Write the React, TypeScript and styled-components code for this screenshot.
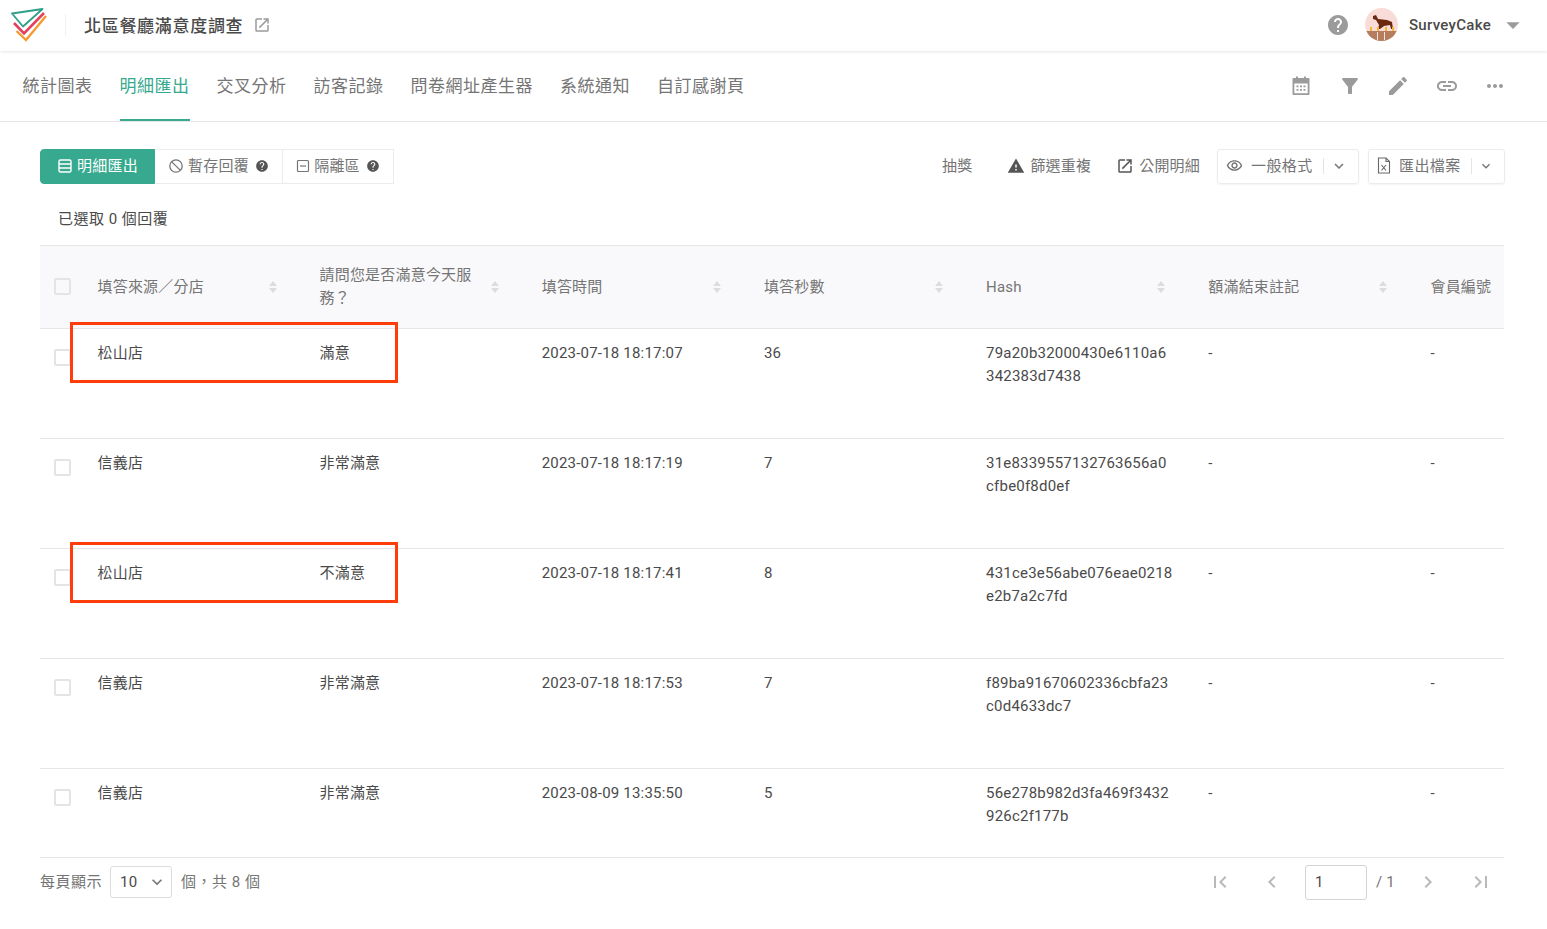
import styled, { createGlobalStyle } from "styled-components";
import {
  MdHelp,
  MdFilterAlt,
  MdEdit,
  MdLink,
  MdMoreHoriz,
  MdOutlineRemoveRedEye,
  MdWarning,
  MdOpenInNew,
  MdExpandMore,
  MdArrowDropDown,
  MdChevronLeft,
  MdChevronRight,
  MdFirstPage,
  MdLastPage,
} from "react-icons/md";

const colors = {
  green: "#36a98f",
  text: "#4a4a4a",
  gray: "#757575",
  icon: "#9b9b9b",
  line: "#e6e6e8",
  red: "#ff3d0a",
};

const GlobalStyle = createGlobalStyle`
  html, body {
    margin: 0;
    padding: 0;
    background: #fff;
    font-family: Roboto, "Noto Sans CJK TC", sans-serif;
    letter-spacing: 0.2px;
    color: ${colors.text};
  }
  * { box-sizing: border-box; }
`;

const Page = styled.div`
  width: 1547px;
  height: 929px;
  overflow: hidden;
`;

const Header = styled.header`
  display: flex;
  align-items: center;
  height: 51px;
  padding: 0 18px 2px 11px;
  box-shadow: 0 1px 3px rgba(0, 0, 0, 0.1);
`;

const Logo = styled.svg`
  width: 36px;
  height: 34px;
  margin-top: 1px;
`;

const HeaderDivider = styled.div`
  width: 1px;
  height: 22px;
  margin: 0 18px 0 18px;
  background: #f0f0f0;
`;

const Title = styled.div`
  font-size: 17px;
  font-weight: 500;
  letter-spacing: 0.7px;
  color: ${colors.text};
`;

const TitleLink = styled.span`
  display: flex;
  margin: 1px 0 0 10px;
  font-size: 18px;
  color: ${colors.icon};
`;

const Spacer = styled.div`
  flex: 1;
`;

const HelpIcon = styled.span`
  display: flex;
  font-size: 24px;
  color: ${colors.icon};
  margin-right: 15px;
`;

const Avatar = styled.svg`
  width: 33px;
  height: 33px;
  border-radius: 50%;
`;

const UserName = styled.div`
  margin-left: 11px;
  font-size: 15px;
  font-weight: 500;
  letter-spacing: 0.3px;
  color: ${colors.text};
`;

const UserCaret = styled.span`
  display: flex;
  margin-left: 6px;
  font-size: 32px;
  color: ${colors.icon};
`;

const TabBar = styled.nav`
  display: flex;
  align-items: stretch;
  height: 71px;
  padding: 0 40px 0 22.5px;
  border-bottom: 1px solid ${colors.line};
`;

const Tab = styled.div<{ $active?: boolean }>`
  display: flex;
  align-items: center;
  margin-right: 27px;
  padding-bottom: 1px;
  font-size: 17px;
  letter-spacing: 0.5px;
  color: ${(p) => (p.$active ? colors.green : colors.gray)};
  border-bottom: 2px solid ${(p) => (p.$active ? colors.green : "transparent")};
`;

const TabIcons = styled.div`
  display: flex;
  align-items: center;
  gap: 24.5px;
  margin-left: auto;
  color: ${colors.icon};
  font-size: 24px;
  svg {
    display: block;
  }
`;

const Main = styled.main`
  padding: 27px 43px 0 40px;
`;

const Toolbar = styled.div`
  display: flex;
  align-items: center;
  height: 35px;
  margin-right: -1px;
`;

const Segment = styled.div<{ $active?: boolean; $w: number }>`
  display: flex;
  align-items: center;
  justify-content: center;
  gap: 4px;
  width: ${(p) => p.$w}px;
  height: 35px;
  padding-bottom: 5px;
  font-size: 15px;
  color: ${(p) => (p.$active ? "#fff" : colors.gray)};
  background: ${(p) => (p.$active ? colors.green : "#fff")};
  border: 1px solid ${(p) => (p.$active ? colors.green : "#ececee")};
  border-left-width: ${(p) => (p.$active ? 1 : 0)}px;
  white-space: nowrap;
  &:first-child {
    border-radius: 4px 0 0 4px;
  }
  &:last-child {
    border-radius: 0 4px 4px 0;
  }
`;

const HintIcon = styled(MdHelp)`
  font-size: 14px;
  margin: 4px 0 0 2px;
  color: #555;
`;

const ToolText = styled.div<{ $mr: number }>`
  display: flex;
  align-items: center;
  gap: 5px;
  margin-right: ${(p) => p.$mr}px;
  padding-bottom: 5px;
  font-size: 15px;
  color: ${colors.gray};
  white-space: nowrap;
  svg {
    font-size: 18px;
    margin-top: 3px;
    color: #555;
  }
`;

const DropButton = styled.div<{ $w: number; $mr?: number }>`
  display: flex;
  align-items: center;
  flex: none;
  width: ${(p) => p.$w}px;
  height: 35px;
  margin-right: ${(p) => p.$mr ?? 0}px;
  padding: 0 6px 5px 8px;
  font-size: 15px;
  color: ${colors.gray};
  border: 1px solid #ececee;
  border-radius: 3px;
  box-shadow: 0 1px 2px rgba(0, 0, 0, 0.05);
  white-space: nowrap;
  svg {
    flex: none;
    margin-top: 3px;
  }
`;

const DropLabel = styled.span`
  margin-left: 8px;
  letter-spacing: 0.4px;
`;

const DropDivider = styled.span`
  width: 1px;
  height: 16px;
  margin: 4px 6px 0 10px;
  background: #e4e4e4;
`;

const SelectedNote = styled.div`
  padding: 24px 0 0 18px;
  height: 61px;
  font-size: 15px;
  line-height: 22px;
  letter-spacing: 0.5px;
  color: ${colors.text};
`;

const Table = styled.div`
  border-top: 1px solid ${colors.line};
`;

const gridColumns = `279.5px repeat(5, 222.2px) 1fr`;

const HeadRow = styled.div`
  position: relative;
  display: grid;
  grid-template-columns: ${gridColumns};
  align-items: center;
  height: 83px;
  background: #f9f9fb;
  border-bottom: 1px solid ${colors.line};
`;

const Row = styled.div<{ $h: number }>`
  position: relative;
  display: grid;
  grid-template-columns: ${gridColumns};
  align-items: start;
  height: ${(p) => p.$h}px;
  border-bottom: 1px solid ${colors.line};
`;

const HeadCell = styled.div<{ $first?: boolean }>`
  position: relative;
  display: flex;
  align-items: center;
  padding-left: ${(p) => (p.$first ? 57.5 : 0)}px;
  padding-right: 60px;
  font-size: 15px;
  line-height: 23px;
  color: ${colors.gray};
  white-space: pre-line;
`;

const LastHeadCell = styled(HeadCell)`
  padding-right: 0;
  white-space: nowrap;
`;

const SortMark = styled.svg`
  position: absolute;
  right: 42px;
  top: 50%;
  width: 10px;
  height: 14px;
  margin-top: -7px;
`;

const Cell = styled.div<{ $first?: boolean }>`
  padding: 13px 0 0 ${(p) => (p.$first ? 57.5 : 0)}px;
  font-size: 15px;
  line-height: 23px;
  color: ${colors.text};
`;

const Checkbox = styled.span`
  position: absolute;
  left: 14px;
  top: 20px;
  width: 17px;
  height: 17px;
  border: 2px solid #e4e4e6;
  border-radius: 2px;
  background: #fff;
`;

const HeadCheckbox = styled(Checkbox)`
  top: 50%;
  margin-top: -9px;
  background: #f9f9fb;
`;

const Highlight = styled.div`
  position: absolute;
  left: 30px;
  top: -7px;
  width: 328px;
  height: 61px;
  border: 3px solid ${colors.red};
`;

const Footer = styled.div`
  display: flex;
  align-items: center;
  height: 48px;
  font-size: 15px;
  color: ${colors.gray};
`;

const FooterText = styled.span`
  padding-bottom: 4px;
  letter-spacing: 0.5px;
`;

const PageSize = styled.div`
  display: flex;
  align-items: center;
  justify-content: space-between;
  width: 62px;
  height: 32px;
  margin: 0 9px 0 8px;
  padding: 0 4px 0 9px;
  border: 1px solid #dcdcdc;
  border-radius: 3px;
  color: ${colors.text};
  svg {
    font-size: 20px;
    color: ${colors.gray};
  }
`;

const Pager = styled.div`
  display: flex;
  align-items: center;
  margin-left: auto;
  margin-right: -2px;
  color: #b9b9b9;
  svg {
    display: block;
    font-size: 24px;
  }
`;

const PagerIcon = styled.span<{ $w: number }>`
  display: flex;
  justify-content: center;
  width: ${(p) => p.$w}px;
`;

const PageInput = styled.div`
  display: flex;
  align-items: center;
  width: 62px;
  height: 35px;
  padding-left: 9px;
  border: 1px solid #d4d4d4;
  border-radius: 3px;
  color: ${colors.text};
`;

const PageTotal = styled.span`
  width: 33px;
  padding-left: 9px;
  color: ${colors.gray};
  white-space: nowrap;
`;

const SurveyLogo = () => (
  <Logo viewBox="0 0 36 34" fill="none">
    <path d="M5.5 23 L15 32 L35 8" stroke="#f59a32" strokeWidth="2.4" />
    <path d="M3 15 L13 25.5 L33 5" stroke="#e2405c" strokeWidth="2.6" />
    <path d="M1 5.5 L31.5 1 L12 18.5 Z" stroke="#2f9f8a" strokeWidth="1.8" strokeLinejoin="round" />
  </Logo>
);

const HorseAvatar = () => (
  <Avatar viewBox="0 0 33 33">
    <rect width="33" height="33" fill="#f9dcd8" />
    <rect y="23" width="33" height="10" fill="#b57c5e" />
    <path d="M8 8 L11 7 L13 11 L22 12 L27 14 L28 21 L26 21 L25 17 L19 18 L15 21 L13 21 L14 17 L11 12 L8 11 Z" fill="#6b2a0e" />
    <rect x="5" y="19" width="2" height="4" fill="#f2b632" />
    <rect x="12" y="19" width="2" height="4" fill="#f2b632" />
    <rect x="20" y="19" width="2" height="4" fill="#f2b632" />
    <rect x="27" y="19" width="2" height="4" fill="#f2b632" />
    <rect x="12" y="24" width="1" height="8" fill="#efe3da" />
    <rect x="19" y="24" width="1" height="8" fill="#efe3da" />
  </Avatar>
);

const CalendarIcon = () => (
  <svg width="24" height="24" viewBox="-2 -2 24 24" fill="#9b9b9b">
    <path d="M2.5 2h2.5V0.5h2V2h6V0.5h2V2h2.5a1 1 0 0 1 1 1v15a1 1 0 0 1-1 1H2.5a1 1 0 0 1-1-1V3a1 1 0 0 1 1-1zm.8 5.5v9.7h13.4V7.500H3.300z" />
    <path d="M5.500 9.500h2v1.700h-2zM9 9.500h2v1.700H9zM12.500 9.500h2v1.700h-2zM5.500 13h2v1.700h-2zM9 13h2v1.700H9zM12.500 13h2v1.700h-2z" />
  </svg>
);

const ToolbarGlyph = styled.svg`
  flex: none;
  margin-top: 3px;
`;

const ListIcon = () => (
  <ToolbarGlyph width="16" height="16" viewBox="0 0 16 16" fill="none" stroke="currentColor" strokeWidth="1.4">
    <rect x="2" y="2" width="12" height="12" rx="1.5" />
    <path d="M2 6h12M2 10h12" />
  </ToolbarGlyph>
);

const BlockIcon = () => (
  <ToolbarGlyph width="16" height="16" viewBox="0 0 16 16" fill="none" stroke="currentColor" strokeWidth="1.3">
    <circle cx="8" cy="8" r="6.2" />
    <path d="M3.6 3.6l8.800 8.800" />
  </ToolbarGlyph>
);

const QuarantineIcon = () => (
  <ToolbarGlyph width="14" height="14" viewBox="0 0 14 14" fill="none" stroke="currentColor" strokeWidth="1.2">
    <rect x="1.5" y="1.5" width="11" height="11" rx="1" />
    <path d="M4 7h6" />
  </ToolbarGlyph>
);

const ExcelIcon = () => (
  <svg width="14" height="17" viewBox="0 0 14 17" fill="none" stroke="#666" strokeWidth="1.1">
    <path d="M1.5 1h7.5l3.5 3.5V16h-11z" />
    <path d="M9 1v3.5h3.5M4.5 8l4.5 5.5M9 8l-4.5 5.5" />
  </svg>
);

const SortIcon = () => (
  <SortMark viewBox="0 0 10 14" fill="#dcdcdf">
    <path d="M5 1l4 5H1zM5 13L1 8h8z" />
  </SortMark>
);

const tabs = ["統計圖表", "明細匯出", "交叉分析", "訪客記錄", "問卷網址產生器", "系統通知", "自訂感謝頁"];

const columns = ["請問您是否滿意今天服\n務？", "填答時間", "填答秒數", "Hash", "額滿結束註記"];

const rows = [
  { store: "松山店", answer: "滿意", time: "2023-07-18 18:17:07", secs: "36", hash: ["79a20b32000430e6110a6", "342383d7438"], marked: true },
  { store: "信義店", answer: "非常滿意", time: "2023-07-18 18:17:19", secs: "7", hash: ["31e8339557132763656a0", "cfbe0f8d0ef"] },
  { store: "松山店", answer: "不滿意", time: "2023-07-18 18:17:41", secs: "8", hash: ["431ce3e56abe076eae0218", "e2b7a2c7fd"], marked: true },
  { store: "信義店", answer: "非常滿意", time: "2023-07-18 18:17:53", secs: "7", hash: ["f89ba91670602336cbfa23", "c0d4633dc7"] },
  { store: "信義店", answer: "非常滿意", time: "2023-08-09 13:35:50", secs: "5", hash: ["56e278b982d3fa469f3432", "926c2f177b"] },
];

export default function App() {
  return (
    <Page>
      <GlobalStyle />
      <Header>
        <SurveyLogo />
        <HeaderDivider />
        <Title>北區餐廳滿意度調查</Title>
        <TitleLink>
          <MdOpenInNew />
        </TitleLink>
        <Spacer />
        <HelpIcon>
          <MdHelp />
        </HelpIcon>
        <HorseAvatar />
        <UserName>SurveyCake</UserName>
        <UserCaret>
          <MdArrowDropDown />
        </UserCaret>
      </Header>

      <TabBar>
        {tabs.map((t, i) => (
          <Tab key={t} $active={i === 1}>
            {t}
          </Tab>
        ))}
        <TabIcons>
          <CalendarIcon />
          <MdFilterAlt />
          <MdEdit />
          <MdLink />
          <MdMoreHoriz />
        </TabIcons>
      </TabBar>

      <Main>
        <Toolbar>
          <Segment $active $w={115}>
            <ListIcon /> 明細匯出
          </Segment>
          <Segment $w={128}>
            <BlockIcon /> 暫存回覆 <HintIcon />
          </Segment>
          <Segment $w={111}>
            <QuarantineIcon /> 隔離區 <HintIcon />
          </Segment>
          <Spacer />
          <ToolText $mr={35}>抽獎</ToolText>
          <ToolText $mr={25}>
            <MdWarning /> 篩選重複
          </ToolText>
          <ToolText $mr={17}>
            <MdOpenInNew /> 公開明細
          </ToolText>
          <DropButton $w={142} $mr={9}>
            <MdOutlineRemoveRedEye size={17} />
            <DropLabel>一般格式</DropLabel>
            <DropDivider />
            <MdExpandMore size={18} />
          </DropButton>
          <DropButton $w={137}>
            <ExcelIcon />
            <DropLabel>匯出檔案</DropLabel>
            <DropDivider />
            <MdExpandMore size={16} />
          </DropButton>
        </Toolbar>

        <SelectedNote>已選取 0 個回覆</SelectedNote>

        <Table>
          <HeadRow>
            <HeadCheckbox />
            <HeadCell $first>
              填答來源／分店
              <SortIcon />
            </HeadCell>
            {columns.map((c) => (
              <HeadCell key={c}>
                {c}
                <SortIcon />
              </HeadCell>
            ))}
            <LastHeadCell>會員編號</LastHeadCell>
          </HeadRow>
          {rows.map((r, i) => (
            <Row key={r.time} $h={i === rows.length - 1 ? 89 : 110}>
              <Checkbox />
              <Cell $first>{r.store}</Cell>
              <Cell>{r.answer}</Cell>
              <Cell>{r.time}</Cell>
              <Cell>{r.secs}</Cell>
              <Cell>
                {r.hash[0]}
                <br />
                {r.hash[1]}
              </Cell>
              <Cell>-</Cell>
              <Cell>-</Cell>
              {r.marked && <Highlight />}
            </Row>
          ))}
        </Table>

        <Footer>
          <FooterText>每頁顯示</FooterText>
          <PageSize>
            10
            <MdExpandMore />
          </PageSize>
          <FooterText>個，共 8 個</FooterText>
          <Pager>
            <PagerIcon $w={36}>
              <MdFirstPage />
            </PagerIcon>
            <PagerIcon $w={67}>
              <MdChevronLeft />
            </PagerIcon>
            <PageInput>1</PageInput>
            <PageTotal>/ 1</PageTotal>
            <PagerIcon $w={56}>
              <MdChevronRight />
            </PagerIcon>
            <PagerIcon $w={50}>
              <MdLastPage />
            </PagerIcon>
          </Pager>
        </Footer>
      </Main>
    </Page>
  );
}
